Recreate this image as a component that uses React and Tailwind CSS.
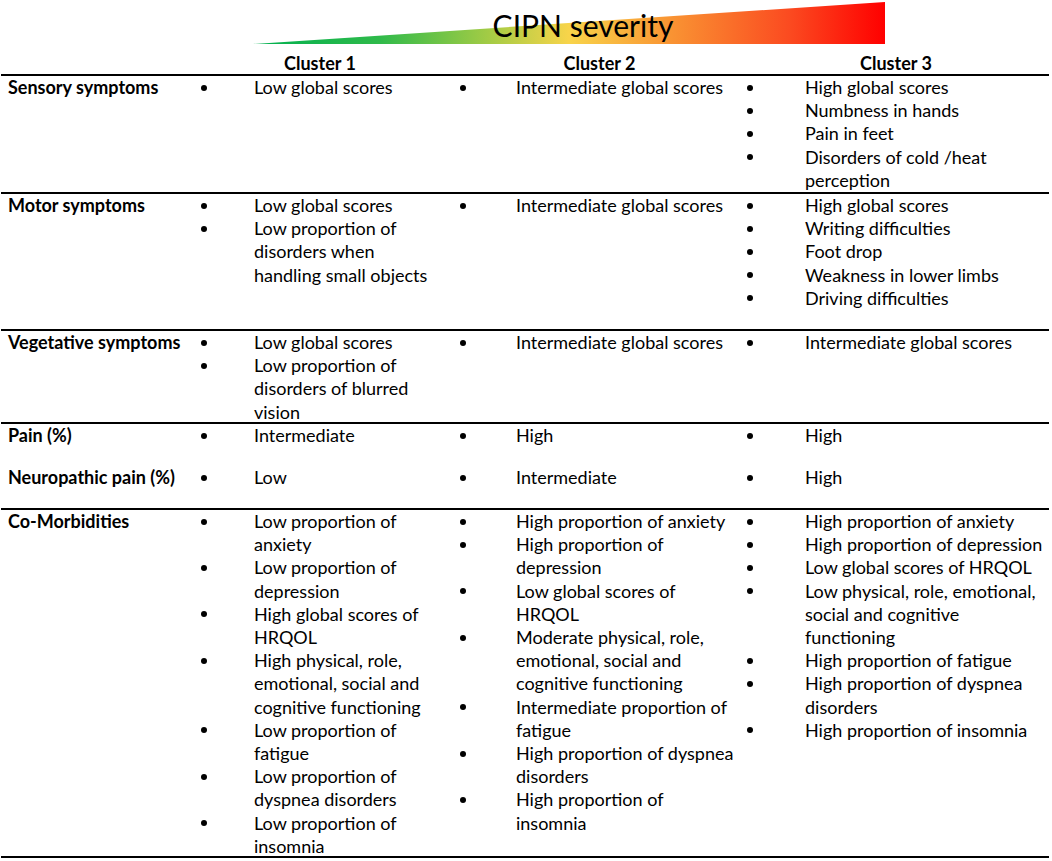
import React from "react";

const rows = [
  {
    label: ["Sensory symptoms"],
    h: "h-[118px]",
    cells: [
      ["Low global scores"],
      ["Intermediate global scores"],
      ["High global scores", "Numbness in hands", "Pain in feet", "Disorders of cold /heat\nperception"],
    ],
  },
  {
    label: ["Motor symptoms"],
    h: "h-[137px]",
    cells: [
      ["Low global scores", "Low proportion of\ndisorders when\nhandling small objects"],
      ["Intermediate global scores"],
      ["High global scores", "Writing difficulties", "Foot drop", "Weakness in lower limbs", "Driving difficulties"],
    ],
  },
  {
    label: ["Vegetative symptoms"],
    h: "h-[93px]",
    cells: [
      ["Low global scores", "Low proportion of\ndisorders of blurred\nvision"],
      ["Intermediate global scores"],
      ["Intermediate global scores"],
    ],
  },
];

const pain = [
  { label: "Pain (%)", cells: [["Intermediate"], ["High"], ["High"]] },
  { label: "Neuropathic pain (%)", cells: [["Low"], ["Intermediate"], ["High"]] },
];

const como = {
  label: "Co-Morbidities",
  cells: [
    [
      "Low proportion of\nanxiety",
      "Low proportion of\ndepression",
      "High global scores of\nHRQOL",
      "High physical, role,\nemotional, social and\ncognitive functioning",
      "Low proportion of\nfatigue",
      "Low proportion of\ndyspnea disorders",
      "Low proportion of\ninsomnia",
    ],
    [
      "High proportion of anxiety",
      "High proportion of\ndepression",
      "Low global scores of\nHRQOL",
      "Moderate physical, role,\nemotional, social and\ncognitive functioning",
      "Intermediate proportion of\nfatigue",
      "High proportion of dyspnea\ndisorders",
      "High proportion of\ninsomnia",
    ],
    [
      "High proportion of anxiety",
      "High proportion of depression",
      "Low global scores of HRQOL",
      "Low physical, role, emotional,\nsocial and cognitive\nfunctioning",
      "High proportion of fatigue",
      "High proportion of dyspnea\ndisorders",
      "High proportion of insomnia",
    ],
  ],
};

const bulletCls = [
  "w-[70px] pl-[17px]",
  "w-[60px] pl-[4px]",
  "w-[62px] pl-[4px]",
];

function Cell({ items, col }) {
  return (
    <div className="flex flex-col">
      {items.map((t, i) => (
        <div key={i} className="flex">
          <div className={`${bulletCls[col]} h-[23.2px] flex items-center shrink-0`}>
            <span className="block w-[6px] h-[6px] rounded-full bg-black" />
          </div>
          <div className="whitespace-pre">{t}</div>
        </div>
      ))}
    </div>
  );
}

const gridCls = "grid grid-cols-[183px_272px_287px_1fr]";

export default function App() {
  return (
    <div
      className="w-[1052px] h-[861px] bg-white text-black overflow-hidden"
      style={{ fontFamily: "Lato, 'Noto Sans', sans-serif" }}
    >
      {/* severity header */}
      <div className="relative h-[52px]">
        <svg
          className="absolute left-[253px] top-[2px]"
          width="632"
          height="42"
          viewBox="0 0 632 42"
        >
          <defs>
            <linearGradient id="sev" x1="0" y1="0" x2="1" y2="0">
              <stop offset="0" stopColor="#00b050" />
              <stop offset="0.2" stopColor="#2fba4a" />
              <stop offset="0.38" stopColor="#a8cc45" />
              <stop offset="0.5" stopColor="#f8d44a" />
              <stop offset="0.66" stopColor="#f99433" />
              <stop offset="0.85" stopColor="#fb4a20" />
              <stop offset="1" stopColor="#ff0000" />
            </linearGradient>
          </defs>
          <polygon points="0,42 632,0 632,42" fill="url(#sev)" />
        </svg>
        <div className="absolute left-[583px] top-[5px] -translate-x-1/2 text-[30px] leading-[40px] whitespace-nowrap">
          CIPN severity
        </div>
      </div>

      <div className="mx-[1px] w-[1048px] text-[18px] leading-[23.2px]">
        {/* cluster header */}
        <div className={`${gridCls} h-[24px] border-b-2 border-black font-bold`}>
          <div />
          <div className="text-center">Cluster 1</div>
          <div className="text-center">Cluster 2</div>
          <div className="text-center">Cluster 3</div>
        </div>

        {rows.map((r, i) => (
          <div key={i} className={`${gridCls} ${r.h} border-b-2 border-black`}>
            <div className="pl-[7px] font-bold whitespace-nowrap">{r.label}</div>
            {r.cells.map((c, j) => (
              <Cell key={j} items={c} col={j} />
            ))}
          </div>
        ))}

        <div className="flex flex-col h-[86px] border-b-2 border-black">
          {pain.map((r, i) => (
            <div key={i} className={`${gridCls} h-[42px]`}>
              <div className="pl-[7px] font-bold whitespace-nowrap">{r.label}</div>
              {r.cells.map((c, j) => (
                <Cell key={j} items={c} col={j} />
              ))}
            </div>
          ))}
        </div>

        <div className={`${gridCls} h-[348px] border-b-2 border-black`}>
          <div className="pl-[7px] font-bold whitespace-nowrap">{como.label}</div>
          {como.cells.map((c, j) => (
            <Cell key={j} items={c} col={j} />
          ))}
        </div>
      </div>
    </div>
  );
}
